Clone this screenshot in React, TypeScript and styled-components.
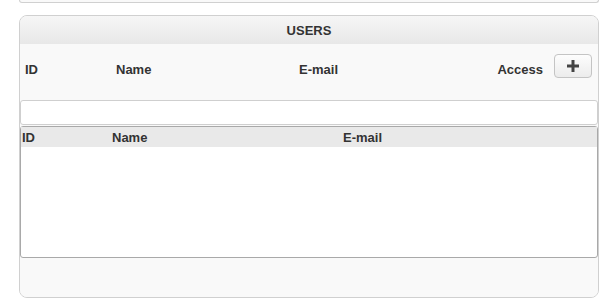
import React from "react";
import styled, { createGlobalStyle } from "styled-components";

const GlobalStyle = createGlobalStyle`
  body {
    margin: 0;
    background: #fff;
    font-family: "Liberation Sans", Arial, sans-serif;
    color: #333;
  }
`;

const Page = styled.div`
  display: flex;
  flex-direction: column;
  gap: 12px;
  padding: 0 17px 0 19px;
`;

const PrevPanel = styled.div`
  height: 2px;
  border: 1px solid #d0d0d0;
  border-top: none;
  border-radius: 0 0 8px 8px;
  background: #f9f9f9;
`;

const Panel = styled.section`
  height: 281px;
  display: flex;
  flex-direction: column;
  border: 1px solid #d0d0d0;
  border-radius: 8px;
  background: #f9f9f9;
  overflow: hidden;
`;

const Header = styled.div`
  height: 28px;
  flex: none;
  display: flex;
  align-items: center;
  justify-content: center;
  background: linear-gradient(#f6f6f6, #e8e8e8);
  font-weight: bold;
  font-size: 13px;
`;

const Columns = styled.div`
  height: 56px;
  flex: none;
  display: grid;
  grid-template-columns: 91px 183px 1fr auto auto;
  align-items: center;
  padding: 0 6px 0 5px;
  font-weight: bold;
  font-size: 13px;
`;

const ColLabel = styled.span`
  padding-bottom: 6px;
`;

const AddButton = styled.button`
  width: 38px;
  height: 24px;
  margin: 10px 0 0 11px;
  padding: 0;
  display: flex;
  align-items: center;
  justify-content: center;
  align-self: start;
  border: 1px solid #c4c4c4;
  border-radius: 4px;
  background: linear-gradient(#fdfdfd, #ececec);
`;

const Search = styled.input`
  flex: none;
  height: 25px;
  box-sizing: border-box;
  margin: 0;
  border: 1px solid #cfcfcf;
  border-radius: 3px;
  background: #fff;
  outline: none;
`;

const Table = styled.div`
  height: 132px;
  flex: none;
  margin-top: 1px;
  box-sizing: border-box;
  border: 1px solid #a9a9a9;
  border-radius: 3px;
  background: #fff;
`;

const TableHead = styled.div`
  height: 20px;
  display: grid;
  grid-template-columns: 90px 231px 1fr;
  align-items: center;
  padding-left: 1px;
  background: #e9e9e9;
  font-weight: bold;
  font-size: 13px;
`;

const Footer = styled.div`
  flex: 1;
  background: #f9f9f9;
`;

const PlusIcon = () => (
  <svg width="12" height="12" viewBox="0 0 12 12">
    <path d="M4.5 0h3v4.5H12v3H7.5V12h-3V7.5H0v-3h4.5z" fill="#444" />
  </svg>
);

export default function App() {
  return (
    <>
      <GlobalStyle />
      <Page>
        <PrevPanel />
        <Panel>
          <Header>USERS</Header>
          <Columns>
            <ColLabel>ID</ColLabel>
            <ColLabel>Name</ColLabel>
            <ColLabel>E-mail</ColLabel>
            <ColLabel>Access</ColLabel>
            <AddButton aria-label="Add user">
              <PlusIcon />
            </AddButton>
          </Columns>
          <Search />
          <Table>
            <TableHead>
              <span>ID</span>
              <span>Name</span>
              <span>E-mail</span>
            </TableHead>
          </Table>
          <Footer />
        </Panel>
      </Page>
    </>
  );
}
